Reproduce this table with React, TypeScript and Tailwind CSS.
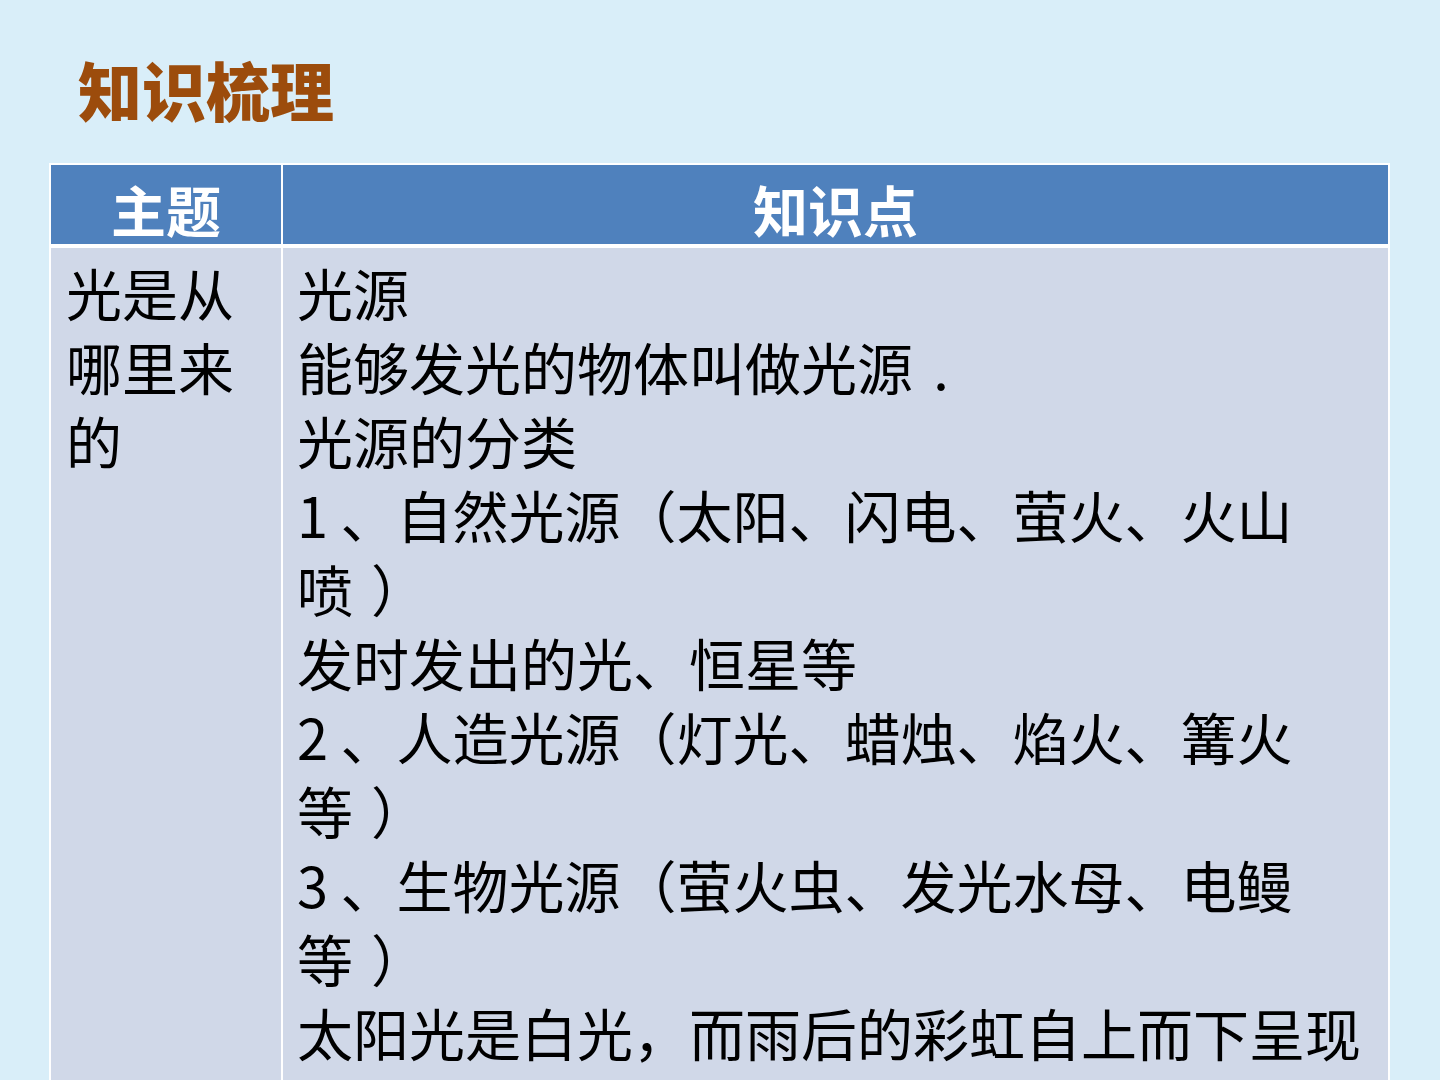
import type { ReactNode } from 'react'

const topicLines = ['光是从', '哪里来', '的']

// closing paren sits further right on the slide than the CJK glyph does
const Paren = () => <span className="pl-[18px]">）</span>

// one entry per rendered line, wrapped by hand to match the slide
const knowledgeLines: ReactNode[] = [
  '光源',
  <>
    能够发光的物体叫做光源
    <span className="inline-block w-[56px] text-center">.</span>
  </>,
  '光源的分类',
  '1 、自然光源（太阳、闪电、萤火、火山',
  <>
    喷<Paren />
  </>,
  '发时发出的光、恒星等',
  '2 、人造光源（灯光、蜡烛、焰火、篝火',
  <>
    等<Paren />
  </>,
  '3 、生物光源（萤火虫、发光水母、电鳗',
  <>
    等<Paren />
  </>,
  '太阳光是白光，而雨后的彩虹自上而下呈现',
]

export default function App() {
  return (
    <div className="h-[1080px] overflow-hidden bg-[#d9eef9] pt-[56px] font-['Noto_Sans_CJK_SC','Noto_Sans',sans-serif]">
      <h1 className="pl-[78px] text-[64px] font-black leading-[64px] text-[#9c4c0c]">
        知识梳理
      </h1>

      <div className="ml-[49px] mt-[43px] grid w-[1341px] grid-cols-[230px_1105px] gap-x-[2px] gap-y-[4px] border-2 border-white bg-white">
        <div className="h-[79px] bg-[#4f81bd] pt-[16px] text-center text-[55px] font-bold leading-[55px] text-white">
          主题
        </div>
        <div className="h-[79px] bg-[#4f81bd] pt-[16px] text-center text-[55px] font-bold leading-[55px] text-white">
          知识点
        </div>

        <div className="bg-[#d0d8e8] pl-[15px] pt-[7px] text-[56px] leading-[74px] text-black">
          {topicLines.map((line) => (
            <div key={line} className="whitespace-nowrap">
              {line}
            </div>
          ))}
        </div>
        <div className="bg-[#d0d8e8] pb-[60px] pl-[14px] pt-[7px] text-[56px] leading-[74px] text-black">
          {knowledgeLines.map((line, i) => (
            <div key={i} className="whitespace-nowrap">
              {line}
            </div>
          ))}
        </div>
      </div>
    </div>
  )
}
